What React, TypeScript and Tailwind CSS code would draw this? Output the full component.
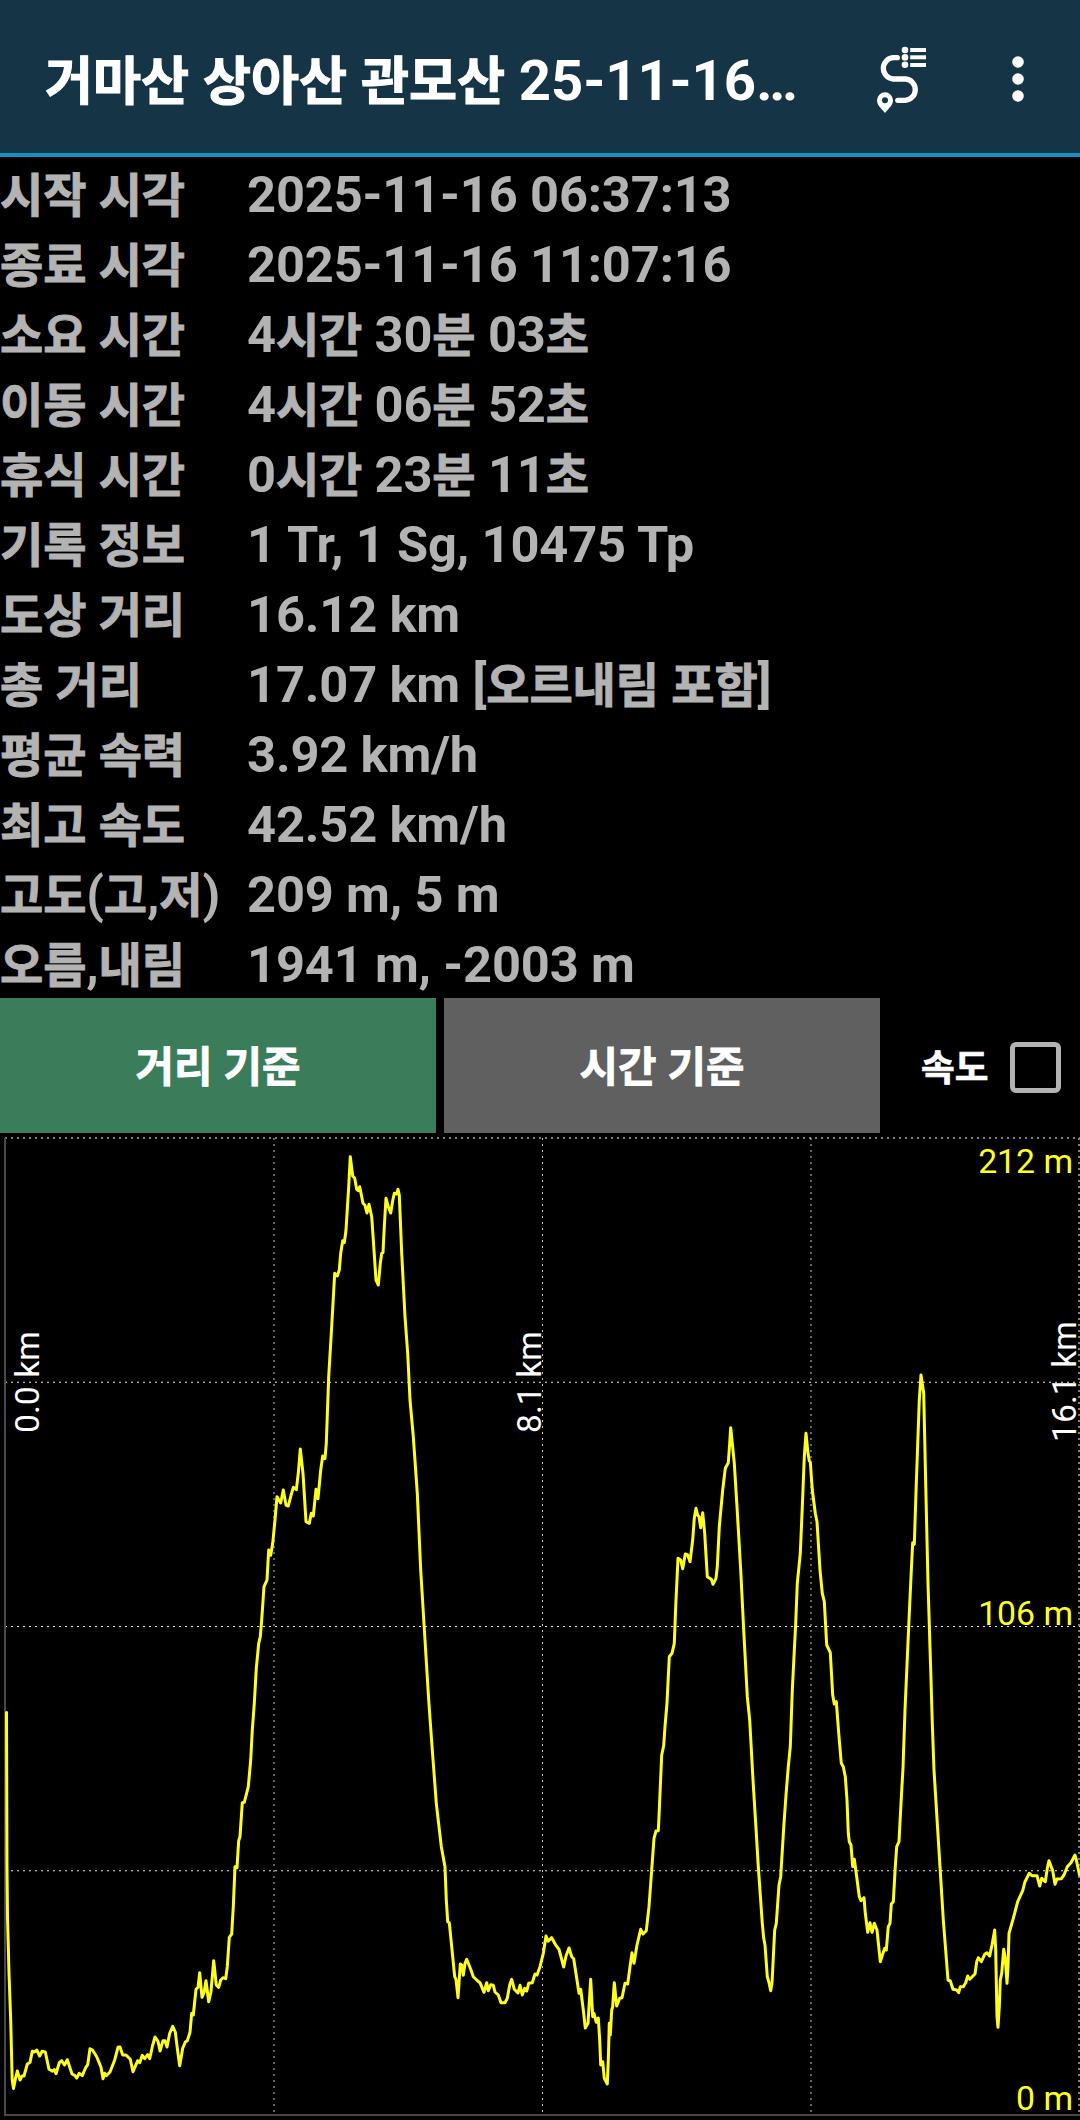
import React, { useState } from 'react';

type Basis = 'distance' | 'time';

interface StatRow {
  label: string;
  value: string;
}

const TITLE = '거마산 상아산 관모산 25-11-16…';

const STATS: StatRow[] = [
  { label: '시작 시각', value: '2025-11-16 06:37:13' },
  { label: '종료 시각', value: '2025-11-16 11:07:16' },
  { label: '소요 시간', value: '4시간 30분 03초' },
  { label: '이동 시간', value: '4시간 06분 52초' },
  { label: '휴식 시간', value: '0시간 23분 11초' },
  { label: '기록 정보', value: '1 Tr, 1 Sg, 10475 Tp' },
  { label: '도상 거리', value: '16.12 km' },
  { label: '총 거리', value: '17.07 km [오르내림 포함]' },
  { label: '평균 속력', value: '3.92 km/h' },
  { label: '최고 속도', value: '42.52 km/h' },
  { label: '고도(고,저)', value: '209 m, 5 m' },
  { label: '오름,내림', value: '1941 m, -2003 m' },
];

// Elevation profile, x/y pairs in screen units
const PROFILE = `
6.5,1712.5 7,1867 7.5,1917 9,1973 10.7,2020 12.2,2080 13.5,2088.5 15.7,2077.5 17.3,2071 20,2080 22,2076 24,2076
27.3,2064 30,2062.5 32.3,2051.3 34.5,2052 36.7,2050 39.7,2056 42,2051.3 45.3,2052 49,2069.3 52.5,2071.3 54.3,2069.5 56,2073.7
59.3,2062.7 61.7,2060.7 64.5,2065 67.3,2059.7 72,2074 74.7,2075.3 76.7,2078 79.3,2073.3 82.3,2075.7 85.5,2068 87.7,2064.7
90,2048.7 92.7,2050.3 96.7,2056.7 101,2067.3 103,2078.7 104.7,2073.3 106.3,2075.7 110,2072 114.7,2060 118,2047.3 120,2047
122.7,2055 126,2055 130.3,2059.3 133,2071.7 137.7,2060.7 139.7,2062.7 142.3,2055.3 144.7,2058.7 147.7,2054.7 149.7,2058.7
152.3,2046.7 155,2037 158,2041.3 160,2051 163,2040.7 165,2040.7 167,2047 169.7,2033.3 172.7,2026.3 175.3,2032 177.3,2048.3
179.7,2065.7 182.7,2048.3 185.3,2042 187.3,2040.7 190,2032.3 191.7,2013.3 193.3,2015 196,1989.3 198,1987.3 199.7,1972.7
202,1997.3 204,1992.7 206,1980.7 208.7,2001.7 211,1991.7 213.7,1960.7 216.3,1985 218.7,1987.3 220.7,1980 223,1977.7
225.7,1978.7 227.3,1966.7 229.3,1937.3 231.7,1934 233.3,1906.7 235,1866.7 237,1867.7 238.7,1840.7 240,1836.7 242.3,1802.7
244.3,1802.3 248.3,1786.7 250.7,1760 252.3,1730 254.3,1703.3 256.3,1668.3 258.7,1643.3 260.3,1636.7 261.7,1620 264,1586.7
267,1580 268.7,1550 270.7,1555.3 272.7,1543.3 275,1520 277,1496.7 280.7,1503 283.3,1490 286,1505 288.3,1506 290.7,1496.7
293.3,1487.3 296.3,1489.7 298.3,1473.3 300.3,1449 303,1473.3 306,1521.7 309.3,1523.3 311.3,1513.3 313.3,1516 316,1489.3
318,1498.7 320.7,1470 322.7,1456 325,1458.7 326.3,1443.3 328.7,1376.7 331.3,1333.3 334.7,1273.3 337.3,1276 339.3,1270
340.7,1253.3 342.7,1240.7 344.3,1242.7 346,1230 348.7,1186.7 350.3,1156.7 352.7,1176 354.7,1178.3 356.7,1189.3 358.3,1190.7
359.7,1186.7 363,1203.3 365,1205.3 367,1213 369,1204.3 371.7,1216.7 374,1250 376,1280 378.3,1285 380.3,1263.3 381.7,1253.3
383,1252.7 384.3,1226.7 386,1198.3 388.3,1206.7 390.7,1213 392.7,1200.7 394.3,1193.3 396.7,1194 398,1189.3 399.3,1195
401.7,1253.3 405,1316.7 407.7,1353.3 410,1400 413.3,1436.7 417.3,1493.3 420.7,1570 428.7,1700 432.3,1750 436.3,1803.3
441.3,1846.7 445,1866.7 446.3,1900 447.7,1921.7 449.3,1922.7 451.7,1946.7 454.7,1976.7 456,1979.3 458,1997.7 460.3,1964
461.7,1965 463.3,1975.3 465,1963.3 466.7,1959.3 470.7,1969.3 473.3,1976.7 477.7,1981 480,1982.7 484,1992.3 486.7,1982.7
488.3,1990.7 490.7,1984.7 493.3,1985.3 495,1992 498.3,1995 501,2002.7 505,2002.7 507.3,1998.3 509.7,1985 511.7,1979.3
514.3,1989.3 518,1993 520,1985.3 522.3,1995 524.7,1988.3 526.7,1991 528.7,1983.3 532.3,1982.7 535,1974 537,1975 540,1966.7
543.3,1953.3 546,1936 548,1941.3 551.7,1937.7 555.7,1945 559,1949.3 563.7,1967 566,1956 569,1948 571.7,1956.7 573.7,1958.7
576.7,1978.3 579,1993.3 580.7,1989.3 583.3,2010 585.3,2028 588,2023.3 590.7,1979.3 592.7,2016.7 594,2013.3 596.3,2022.3
598.3,2018 599.7,2040 600.7,2065 602.7,2061.7 604.3,2078.3 607.3,2084 608.3,2060 609.3,2023.3 610.3,2035 611.7,2010
612.7,2006.7 614.3,1982.7 616.7,2006 619.7,1998.3 622,1997.7 625,1983.3 627.7,1984 630,1966.7 632,1952.7 634,1963.3
637,1945 640.7,1929.3 643,1934 646.3,1930.7 649,1906.7 651.7,1870 654,1838.3 656,1831 658.3,1830.7 659.3,1810
661.7,1755 663.7,1745.5 665,1726.7 667,1703 669.3,1656.7 672,1653.3 674.3,1643.3 675.7,1606.7 678,1558.3 680.7,1560
682.7,1568.7 685.3,1554 687.7,1555 690,1561.7 692.7,1540 694.3,1518.3 696,1508.3 697.7,1515.3 699,1516.7 700.7,1527.7
702.7,1512.7 704.7,1533.3 707.3,1576.7 711.3,1579.3 713,1584.3 716,1578.3 717.3,1566.7 719.3,1526.7 722.7,1490
725.3,1468.3 728.3,1462.7 729.7,1443.3 730.7,1427.7 732.3,1443.3 734.3,1463.3 737,1506.7 740.7,1570 743.7,1630
747.3,1696.7 749.7,1720 753,1780 755.7,1823.3 758.3,1866.7 762.3,1923.3 763.7,1938.3 765,1945 767.3,1976.7 769,1982.7
770.7,1990.7 772,1983.3 774.7,1930 776.3,1923.3 779,1885 780.7,1876.7 784,1823.3 786,1795 788.3,1766.7 790.3,1746.7
792.3,1690 795.7,1623.3 797.3,1583.3 800.3,1553.3 802.3,1506.7 804.3,1456.7 806,1433.3 808,1453.3 809.3,1461 810.3,1462
812.3,1490 815.3,1513.3 817,1521.7 820,1570 822.3,1593.3 824.3,1601.7 826.7,1645 830.3,1652.7 832.7,1695 834.3,1704
836.3,1701.7 839,1736.7 841.3,1763.3 843.3,1766.7 845.3,1776.7 847,1800 848.3,1833.3 849.3,1841.7 851,1845 852.7,1866.7
854.3,1859.3 856.7,1876.7 859.3,1896.7 861,1900.7 864,1897.7 865.3,1913.3 867.7,1932.3 870,1922.7 872,1932.3 874.3,1923.3
877,1930 880.3,1961.7 882.7,1954 884.7,1948.3 886.3,1950 888.3,1926.7 890,1923.3 891.3,1904 893.3,1901.7 895.3,1866.7
896.7,1846.7 899,1841.7 901,1803.3 903,1768 905,1710 908.7,1626.7 911,1576.7 912.7,1542.7 914.3,1544.3 916.3,1483.3
919.3,1400 921,1375 923.7,1393.3 925.7,1483.3 928,1583.3 930.7,1670 932.3,1723.3 934,1770 937.3,1823.3 940,1866.7
943.3,1920 948,1980 950.3,1981 953,1989.3 956.7,1990 958.7,1992.7 960.3,1986.7 963.3,1986.7 965.7,1982.7 967.7,1976
969.7,1979.3 975,1974 976.7,1961.7 978.3,1957.7 981.3,1961.7 984.7,1954.3 987,1952.7 989.7,1956 992,1945 994.7,1930
995.7,1950 997,2016.7 998,2027.3 999.3,2006.7 1000.3,1980 1001.7,1973.3 1003.7,1949.3 1005.3,1958.3 1007,1983.3
1008,1966.7 1009,1933.3 1013.3,1918.3 1017.7,1901.7 1022.7,1890.7 1025,1881.7 1029.3,1873.3 1032,1875.7 1037,1875.7
1039.7,1886 1041.7,1878.3 1045.3,1881.7 1047.3,1868.3 1049,1860.7 1052.7,1870.7 1055,1884.3 1057,1879 1061.3,1878.7
1064,1875 1067.3,1866.7 1071,1862.7 1075,1855 1076.7,1861.7 1079.5,1875`;

const GRID_X = [274, 542.5, 811];
const GRID_Y = [1382.25, 1626.5, 1870.75];

// Hangul runs are set slightly smaller and heavier than the latin digits beside them
const Mixed: React.FC<{ text: string }> = ({ text }) => (
  <>
    {text.split(/([가-힣]+)/).map((part, i) =>
      i % 2 === 1 ? (
        <span key={i} className="text-[0.93em] leading-none [-webkit-text-stroke:0.02em_currentColor]">{part}</span>
      ) : (
        part
      )
    )}
  </>
);

const RouteIcon = () => (
  <svg viewBox="0 0 52 70" className="h-[70px] w-[52px]" fill="white">
    <path
      d="M22.3 14.7H18a10.7 10.7 0 0 0 0 21.3h12.6a10.7 10.7 0 0 1 0 21.3h-7.8"
      fill="none"
      stroke="white"
      strokeWidth="5.3"
      strokeLinecap="round"
    />
    <circle cx="30" cy="7" r="3.3" />
    <circle cx="30" cy="14.4" r="3.3" />
    <circle cx="30" cy="21.8" r="3.3" />
    <rect x="35.2" y="5" width="15.8" height="4" />
    <rect x="35.2" y="12.3" width="15.8" height="4" />
    <rect x="35.2" y="20" width="15.8" height="4" />
    <path
      fillRule="evenodd"
      d="M10 49.3a8 8 0 0 0-8 8c0 4.6 3.6 7.5 8 12.7 4.4-5.2 8-8.1 8-12.7a8 8 0 0 0-8-8zm0 5a3 3 0 1 1 0 6 3 3 0 0 1 0-6z"
    />
  </svg>
);

const MoreIcon = () => (
  <svg viewBox="0 0 12 46" className="h-[46px] w-3" fill="white">
    <circle cx="6" cy="6" r="5.8" />
    <circle cx="6" cy="23" r="5.8" />
    <circle cx="6" cy="40" r="5.8" />
  </svg>
);

const ElevationChart = () => (
  <svg viewBox="0 1133 1080 987" className="block h-[987px] w-full">
    <g strokeDasharray="2 4" fill="none">
      <path d="M5 1138H1080" stroke="#808080" strokeWidth="2" />
      <path d="M1079 1138V2115" stroke="#808080" strokeWidth="2" />
      {GRID_X.map(x => (
        <path key={x} d={`M${x} 1138V2115`} stroke="#c8c8c8" strokeWidth="1" />
      ))}
      {GRID_Y.map(y => (
        <path key={y} d={`M5 ${y}H1080`} stroke="#e6e6e6" strokeWidth="1" />
      ))}
    </g>
    <path d="M5 1138V2115H1080" fill="none" stroke="#484848" strokeWidth="2" />

    <g className="text-[33.75px]" fill="white">
      <text transform="translate(38.5 1433) rotate(-90)">0.0 km</text>
      <text transform="translate(540.5 1433) rotate(-90)">8.1 km</text>
      <text transform="translate(1076 1442) rotate(-90)">16.1 km</text>
    </g>

    <polyline
      points={PROFILE}
      fill="none"
      stroke="#ffff1e"
      strokeWidth="3"
      strokeLinejoin="round"
      strokeLinecap="round"
    />

    <g className="text-[33.75px]" fill="#ffff1e" textAnchor="end">
      <text x="1073" y="1173">212 m</text>
      <text x="1073" y="1625">106 m</text>
      <text x="1073" y="2110">0 m</text>
    </g>
  </svg>
);

export default function App() {
  const [basis, setBasis] = useState<Basis>('distance');
  const [showSpeed, setShowSpeed] = useState(false);

  return (
    <div className="flex h-[2120px] w-[1080px] flex-col overflow-hidden bg-black font-[Roboto,'Noto_Sans_CJK_KR',sans-serif]">
      <header className="flex h-[157px] shrink-0 items-center border-b-4 border-[#1890be] bg-[#153445] pl-[45px]">
        <h1 className="w-[830px] pt-[9px] text-[56.25px] leading-[144px] font-bold tracking-[-0.1px] whitespace-nowrap text-white">
          <Mixed text={TITLE} />
        </h1>
        <button className="pt-[3px]"><RouteIcon /></button>
        <button className="ml-[85px] pt-[5px]"><MoreIcon /></button>
      </header>

      <dl className="shrink-0 text-[50.6px] font-bold tracking-[-0.15px] text-[#b3b3b3]">
        {STATS.map(row => (
          <div key={row.label} className="flex h-[70px] items-start pt-[3px] leading-[70px] whitespace-nowrap">
            <dt className="w-[247px]"><Mixed text={row.label} /></dt>
            <dd><Mixed text={row.value} /></dd>
          </div>
        ))}
      </dl>

      <div className="mt-px flex h-[135px] shrink-0 gap-2 text-[45px] font-bold text-white">
        <button
          onClick={() => setBasis('distance')}
          className={`w-[436px] pt-[2px] ${basis === 'distance' ? 'bg-[#3b7c5a]' : 'bg-[#606060]'}`}
        >
          <Mixed text="거리 기준" />
        </button>
        <button
          onClick={() => setBasis('time')}
          className={`w-[436px] pt-[2px] ${basis === 'time' ? 'bg-[#3b7c5a]' : 'bg-[#606060]'}`}
        >
          <Mixed text="시간 기준" />
        </button>
        <label className="ml-[33px] flex items-center pt-[3px] text-[39.4px]">
          <span className="w-[89px] pt-px"><Mixed text="속도" /></span>
          <input
            type="checkbox"
            checked={showSpeed}
            onChange={e => setShowSpeed(e.target.checked)}
            className="size-[51px] appearance-none rounded-[6px] border-[5px] border-[#b3b3b3] checked:bg-[#b3b3b3]"
          />
        </label>
      </div>

      <ElevationChart />
    </div>
  );
}
